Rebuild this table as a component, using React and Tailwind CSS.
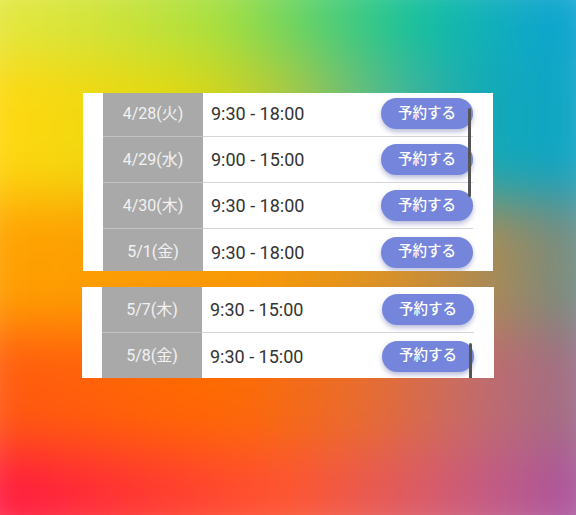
import React from "react";

const font = { fontFamily: "Roboto, 'Noto Sans CJK JP', sans-serif" };

function Row({ date, time, last }) {
  return (
    <div className="flex h-[46px]">
      <div
        className={`w-[100px] shrink-0 bg-[#a9a9a9] flex items-center justify-center text-[16px] text-[#f2f2f2] ${last ? "" : "border-b border-[#c2c2c2]"}`}
      >
        {date}
      </div>
      <div
        className={`flex-1 flex items-center justify-between pl-2 ${last ? "" : "border-b border-[#d6d6d6]"}`}
      >
        <span className="text-[18px] text-[#333333]">{time}</span>
        <button className="w-[92px] h-[31px] rounded-full bg-[#7585dc] text-white text-[14.5px] font-medium shadow-[0_3px_5px_rgba(60,70,150,0.35)] flex items-center justify-center">
          予約する
        </button>
      </div>
    </div>
  );
}

export default function App() {
  const g1 = [
    ["4/28(火)", "9:30 - 18:00"],
    ["4/29(水)", "9:00 - 15:00"],
    ["4/30(木)", "9:30 - 18:00"],
    ["5/1(金)", "9:30 - 18:00"],
  ];
  const g2 = [
    ["5/7(木)", "9:30 - 15:00"],
    ["5/8(金)", "9:30 - 15:00"],
  ];
  return (
    <div className="relative w-full h-[515px] overflow-hidden" style={font}>
      <div className="absolute -inset-10 flex flex-col blur-[28px]">
        <div className="h-[100px] bg-[linear-gradient(to_right,#e4e840_0%,#e4e840_7%,#cfe43c_22%,#a6e040_40%,#55d070_55%,#12c0a0_70%,#10a8c8_86%,#0aa0d8_100%)]" />
        <div className="h-[140px] bg-[linear-gradient(to_right,#ffd810_0%,#ffd810_7%,#e0d810_35%,#b0c840_50%,#50b890_65%,#10a8b8_80%,#10a4cc_100%)]" />
        <div className="h-[130px] bg-[linear-gradient(to_right,#ffa000_0%,#ffa000_7%,#f89a08_45%,#e09420_62%,#c08c40_75%,#8a8a70_88%,#5a9098_100%)]" />
        <div className="h-[120px] bg-[linear-gradient(to_right,#ff5a10_0%,#ff5a10_7%,#ff6a00_40%,#e86c30_62%,#c06a70_80%,#907090_100%)]" />
        <div className="h-[105px] bg-[linear-gradient(to_right,#ff1a40_0%,#ff1a40_7%,#ff3a30_30%,#ff5530_50%,#e05a60_68%,#c05a88_82%,#a050a8_100%)]" />
      </div>
      <div className="relative pt-[93px] pl-[83px] flex flex-col gap-4">
        <div className="relative w-[410px] h-[178px] bg-white px-5 overflow-hidden">
          <div className="-mt-[2px]">
            {g1.map(([d, t], i) => (
              <Row key={d} date={d} time={t} last={i === g1.length - 1} />
            ))}
          </div>
          <div className="absolute left-[385px] top-[15px] w-[2.5px] h-[89px] bg-[#555] rounded-full" />
        </div>
        <div className="relative -ml-px w-[412px] h-[91px] bg-white px-5 overflow-hidden">
          {g2.map(([d, t], i) => (
            <Row key={d} date={d} time={t} last={i === g2.length - 1} />
          ))}
          <div className="absolute left-[387px] top-[56px] w-[2.5px] h-[40px] bg-[#555] rounded-full" />
        </div>
      </div>
    </div>
  );
}
